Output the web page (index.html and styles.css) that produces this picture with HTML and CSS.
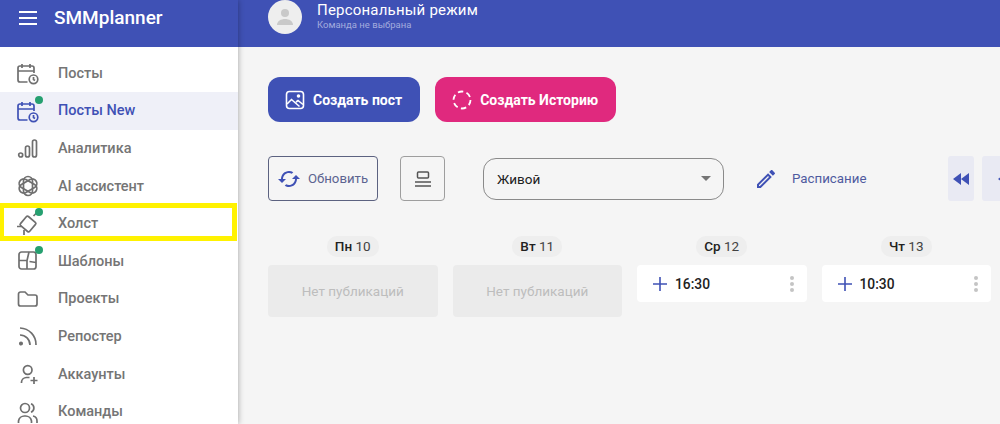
FILE: index.html
```html
<!DOCTYPE html>
<html lang="en">
<head>
    <meta charset="UTF-8">
    <title>SMMplanner</title>
    <link rel="stylesheet" href="styles.css">
</head>
<body>
    <div class="app">
        <aside class="sidebar">
            <div class="brand">
                <svg class="burger" width="18" height="14" viewBox="0 0 18 14"><path d="M0 1h18M0 7h18M0 13h18" stroke="#fff" stroke-width="1.8"/></svg>
                <span class="brand-name">SMMplanner</span>
            </div>
            <nav class="menu">
                <a class="menu-item">
                    <svg class="menu-icon" viewBox="0 0 22 22"><path d="M10.500 20H3a2 2 0 0 1-2-2V6a2 2 0 0 1 2-2h12a2 2 0 0 1 2 2v5M1 9h16M5 2v4M13 2v4"/><circle cx="16.500" cy="17.300" r="4.300"/><path d="M16.500 15v2.500l1.500 1"/></svg>
                    Посты
                </a>
                <a class="menu-item active">
                    <span class="dot"></span>
                    <svg class="menu-icon" viewBox="0 0 22 22"><path d="M10.500 20H3a2 2 0 0 1-2-2V6a2 2 0 0 1 2-2h12a2 2 0 0 1 2 2v5M1 9h16M5 2v4M13 2v4"/><circle cx="16.500" cy="17.300" r="4.300"/><path d="M16.500 15v2.500l1.500 1"/></svg>
                    Посты New
                </a>
                <a class="menu-item">
                    <svg class="menu-icon" viewBox="0 0 22 22"><circle cx="3.700" cy="18" r="2"/><rect x="8.500" y="9" width="4" height="11" rx="2"/><rect x="15.500" y="3" width="4" height="17" rx="2"/></svg>
                    Аналитика
                </a>
                <a class="menu-item">
                    <svg class="menu-icon" viewBox="0 0 22 22"><rect x="6.500" y="1.500" width="9" height="19" rx="4.500"/><rect x="6.500" y="1.500" width="9" height="19" rx="4.500" transform="rotate(60 11 11)"/><rect x="6.500" y="1.500" width="9" height="19" rx="4.500" transform="rotate(120 11 11)"/></svg>
                    AI ассистент
                </a>
                <a class="menu-item marked">
                    <span class="dot"></span>
                    <svg class="menu-icon" viewBox="0 0 22 22"><rect x="5" y="5" width="12" height="12" rx="1.500" transform="rotate(40 11 11)"/><path d="M0 13.500h4.500M7 17v5M16.500 3l3-3"/></svg>
                    Холст
                </a>
                <a class="menu-item">
                    <span class="dot"></span>
                    <svg class="menu-icon" viewBox="0 0 22 22"><rect x="2" y="2" width="17" height="17" rx="2.500"/><path d="M2 10.500h8M10 19v-8.500l2-8.500M12.500 11.500l6.500 1"/></svg>
                    Шаблоны
                </a>
                <a class="menu-item">
                    <svg class="menu-icon" viewBox="0 0 22 22"><path d="M1.500 6a2 2 0 0 1 2-2h4.500l3 3h7a2 2 0 0 1 2 2v7a2 2 0 0 1-2 2h-14.500a2 2 0 0 1-2-2z"/></svg>
                    Проекты
                </a>
                <a class="menu-item">
                    <svg class="menu-icon" viewBox="0 0 22 22"><path d="M3 10a10 10 0 0 1 10 10M3 3a16.500 16.500 0 0 1 16 17"/><circle cx="4" cy="18.500" r="1.200" class="solid"/></svg>
                    Репостер
                </a>
                <a class="menu-item">
                    <svg class="menu-icon" viewBox="0 0 22 22"><circle cx="10.700" cy="7" r="4.300"/><path d="M4.500 20v-1a5 5 0 0 1 5-4.500h3M17 14v7M13.500 17.500h7"/></svg>
                    Аккаунты
                </a>
                <a class="menu-item">
                    <svg class="menu-icon" viewBox="0 0 22 22"><circle cx="8" cy="7" r="4.500"/><path d="M1.500 22v-2a6 6 0 0 1 6-5h1a6 6 0 0 1 6 5v2M14 2.800a4.500 4.500 0 0 1 0 8.400M16 15a5 5 0 0 1 4 5v2"/></svg>
                    Команды
                </a>
            </nav>
        </aside>

        <div class="main">
            <header class="topbar">
                <div class="avatar">
                    <svg width="20" height="20" viewBox="0 0 20 20"><circle cx="10" cy="6" r="4" fill="#c9c9c9"/><path d="M2 18c0-4 4-6 8-6s8 2 8 6z" fill="#c9c9c9"/></svg>
                </div>
                <div class="team">
                    <div class="team-name">Персональный режим</div>
                    <div class="team-note">Команда не выбрана</div>
                </div>
            </header>

            <div class="content">
                <div class="create-row">
                    <button class="create-btn blue">
                        <svg width="20" height="20" viewBox="0 0 20 20" fill="none" stroke="#fff" stroke-width="1.600"><rect x="1.500" y="1.500" width="17" height="17" rx="3"/><path d="M2 14l4.500-4.500 8 7M11 12l2-1.500 5 4"/><circle cx="13.500" cy="6" r="1" fill="#fff"/></svg>
                        Создать пост
                    </button>
                    <button class="create-btn pink">
                        <svg width="20" height="20" viewBox="0 0 20 20" fill="none" stroke="#fff" stroke-width="1.800"><circle cx="10" cy="10" r="8.500" stroke-dasharray="5.500 3.400"/></svg>
                        Создать Историю
                    </button>
                </div>

                <div class="tools-row">
                    <button class="refresh-btn">
                        <svg width="24" height="24" viewBox="0 0 24 24"><path fill="#3f51b5" d="M19 8l-4 4h3c0 3.310-2.690 6-6 6-1.010 0-1.970-.25-2.800-.7l-1.460 1.460C8.970 19.540 10.430 20 12 20c4.420 0 8-3.580 8-8h3l-4-4zM6 12c0-3.310 2.690-6 6-6 1.010 0 1.970.25 2.800.7l1.460-1.460C15.030 4.460 13.570 4 12 4c-4.420 0-8 3.580-8 8H1l4 4 4-4H6z"/></svg>
                        Обновить
                    </button>
                    <button class="view-btn">
                        <svg width="18" height="18" viewBox="0 0 18 18" fill="none" stroke="#555" stroke-width="1.500"><rect x="3.500" y="2" width="11" height="6" rx="1"/><path d="M1 12h16M1 16h16"/></svg>
                    </button>
                    <div class="select-box">
                        Живой
                        <span class="caret"></span>
                    </div>
                    <div class="schedule">
                        <svg width="24" height="24" viewBox="0 0 24 24"><path fill="#3f51b5" d="M14.060 9.020l.92.92L5.920 19H5v-.92l9.060-9.060M17.660 3c-.25 0-.51.1-.7.29l-1.830 1.830 3.750 3.750 1.830-1.830c.39-.39.39-1.020 0-1.410l-2.340-2.340c-.2-.2-.45-.29-.71-.29zm-3.600 3.190L3 17.250V21h3.750L17.810 9.940l-3.750-3.750z"/></svg>
                        <span>Расписание</span>
                    </div>
                    <button class="nav-btn">
                        <svg width="16" height="12" viewBox="0 0 16 12"><path d="M8 0v12L0 6zM16 0v12L8 6z" fill="#3f51b5"/></svg>
                    </button>
                    <button class="nav-btn wide">
                        <svg width="16" height="12" viewBox="0 0 16 12"><path d="M10 0v12L2 6z" fill="#3f51b5"/></svg>
                    </button>
                </div>

                <div class="week">
                    <div class="day">
                        <div class="day-label"><span><b>Пн</b> 10</span></div>
                        <div class="empty-slot">Нет публикаций</div>
                    </div>
                    <div class="day">
                        <div class="day-label"><span><b>Вт</b> 11</span></div>
                        <div class="empty-slot">Нет публикаций</div>
                    </div>
                    <div class="day">
                        <div class="day-label"><span><b>Ср</b> 12</span></div>
                        <div class="slot">
                            <svg width="14" height="14" viewBox="0 0 14 14"><path d="M7 0v14M0 7h14" stroke="#3f51b5" stroke-width="1.600"/></svg>
                            <span class="slot-time">16:30</span>
                            <span class="more"><i></i><i></i><i></i></span>
                        </div>
                    </div>
                    <div class="day">
                        <div class="day-label"><span><b>Чт</b> 13</span></div>
                        <div class="slot">
                            <svg width="14" height="14" viewBox="0 0 14 14"><path d="M7 0v14M0 7h14" stroke="#3f51b5" stroke-width="1.600"/></svg>
                            <span class="slot-time">10:30</span>
                            <span class="more"><i></i><i></i><i></i></span>
                        </div>
                    </div>
                </div>
            </div>
        </div>
    </div>
</body>
</html>
```

FILE: styles.css
```css
/* Base styles */
html, body {
    margin: 0;
    height: 100%;
    overflow: hidden;
}
body {
    font-family: Roboto, "Liberation Sans", sans-serif;
    background-color: #f5f5f5;
    color: #212121;
}
button {
    font-family: inherit;
    cursor: pointer;
}
.app {
    display: flex;
    height: 424px;
    overflow: hidden;
}

/* Sidebar */
.sidebar {
    width: 238px;
    flex-shrink: 0;
    background: #fff;
    box-shadow: 0 0 6px rgba(0, 0, 0, 0.35);
    z-index: 2;
}
.brand {
    display: flex;
    align-items: center;
    height: 47px;
    box-sizing: border-box;
    padding: 0 0 12px 19px;
    gap: 17px;
    background-color: #3f51b5;
    color: #fff;
}
.brand-name {
    font-size: 19px;
    font-weight: 500;
}
.menu {
    padding-top: 7.500px;
}
.menu-item {
    position: relative;
    display: flex;
    align-items: center;
    height: 37.600px;
    padding-left: 17px;
    gap: 19px;
    font-size: 14.500px;
    font-weight: 500;
    color: #757575;
}
.menu-icon {
    width: 22px;
    height: 22px;
    flex-shrink: 0;
    overflow: visible;
    fill: none;
    stroke: #6f6f6f;
    stroke-width: 1.700;
}
.menu-icon .solid {
    fill: #6f6f6f;
}
.menu-item.active {
    background: #eff0f8;
    color: #3f51b5;
}
.menu-item.active .menu-icon {
    stroke: #3f51b5;
}
.menu-item.marked::after {
    content: "";
    position: absolute;
    left: -1px;
    right: 1px;
    top: -2px;
    height: 38px;
    box-sizing: border-box;
    border: 5px solid #fff200;
}
.dot {
    position: absolute;
    left: 35px;
    top: 3.500px;
    width: 8px;
    height: 8px;
    border-radius: 50%;
    background: #26a070;
}
.marked .dot {
    z-index: 1;
}

/* Top bar */
.main {
    flex: 1;
    min-width: 0;
}
.topbar {
    display: flex;
    align-items: flex-start;
    height: 47px;
    box-sizing: border-box;
    padding-left: 30px;
    gap: 15px;
    background-color: #3f51b5;
}
.avatar {
    display: flex;
    align-items: center;
    justify-content: center;
    width: 34px;
    height: 34px;
    border-radius: 50%;
    background: #eeeeee;
}
.team-name {
    margin-top: 1px;
    font-size: 15px;
    line-height: 18px;
    letter-spacing: 0.200px;
    color: #fff;
}
.team-note {
    font-size: 9.500px;
    line-height: 12px;
    color: #a3acde;
}

/* Content */
.content {
    padding: 30px 0 0 30px;
}
.create-row {
    display: flex;
    gap: 15px;
}
.create-btn {
    display: flex;
    align-items: center;
    height: 45px;
    padding: 0 18px 0 17px;
    gap: 8px;
    border: none;
    border-radius: 12px;
    font-size: 14px;
    font-weight: 700;
    color: #fff;
}
.create-btn.blue {
    background-color: #3f51b5;
}
.create-btn.pink {
    background-color: #e0297e;
}
.tools-row {
    display: flex;
    align-items: center;
    margin-top: 34px;
}
.tools-row > * {
    flex-shrink: 0;
}
.refresh-btn {
    display: flex;
    align-items: center;
    width: 110px;
    height: 45px;
    padding: 0 0 0 8px;
    gap: 7px;
    background: none;
    border: 1px solid #5c6280;
    border-radius: 4px;
    font-size: 13.200px;
    color: #5c6490;
}
.view-btn {
    display: flex;
    align-items: center;
    justify-content: center;
    width: 45px;
    height: 45px;
    margin-left: 22px;
    padding: 0;
    background: none;
    border: 1px solid #9e9e9e;
    border-radius: 4px;
}
.select-box {
    position: relative;
    width: 241px;
    height: 42px;
    line-height: 41px;
    box-sizing: border-box;
    margin-left: 38px;
    padding-left: 13px;
    border: 1px solid #8a8a8a;
    border-radius: 13px;
    font-size: 13.500px;
    color: #212121;
}
.caret {
    position: absolute;
    right: 12px;
    top: 17px;
    border-style: solid;
    border-width: 5px 5px 0;
    border-color: #757575 transparent transparent;
}
.schedule {
    display: flex;
    align-items: center;
    width: 194px;
    margin-left: 30px;
    gap: 14px;
    font-size: 13.300px;
    color: #4f5b9f;
}
.nav-btn {
    display: flex;
    align-items: center;
    justify-content: center;
    width: 26px;
    height: 45px;
    margin-right: 8px;
    padding: 0;
    background: #e9eaf3;
    border: none;
    border-radius: 3px;
}
.nav-btn.wide {
    width: 44px;
}

/* Week */
.week {
    display: flex;
    gap: 15px;
    margin-top: 35px;
}
.day {
    width: 169.500px;
    flex-shrink: 0;
}
.day-label {
    text-align: center;
    font-size: 13.500px;
}
.day-label span {
    display: inline-block;
    height: 21px;
    line-height: 21px;
    padding: 0 8px;
    border-radius: 10px;
    background: #eeeeee;
    color: #424242;
}
.day-label b {
    font-weight: 500;
    color: #212121;
}
.empty-slot {
    height: 52px;
    line-height: 52px;
    margin-top: 8px;
    border-radius: 4px;
    background: #ebebeb;
    text-align: center;
    font-size: 13.500px;
    color: #bdbdbd;
}
.slot {
    display: flex;
    align-items: center;
    height: 37px;
    margin-top: 8px;
    padding: 0 13px 0 16px;
    gap: 8px;
    border-radius: 4px;
    background: #fff;
    font-size: 13.800px;
    font-weight: 500;
}
.slot-time {
    flex: 1;
}
.more {
    display: flex;
    flex-direction: column;
    gap: 2px;
}
.more i {
    width: 4px;
    height: 4px;
    border-radius: 50%;
    background: #c4c4c4;
}
```
